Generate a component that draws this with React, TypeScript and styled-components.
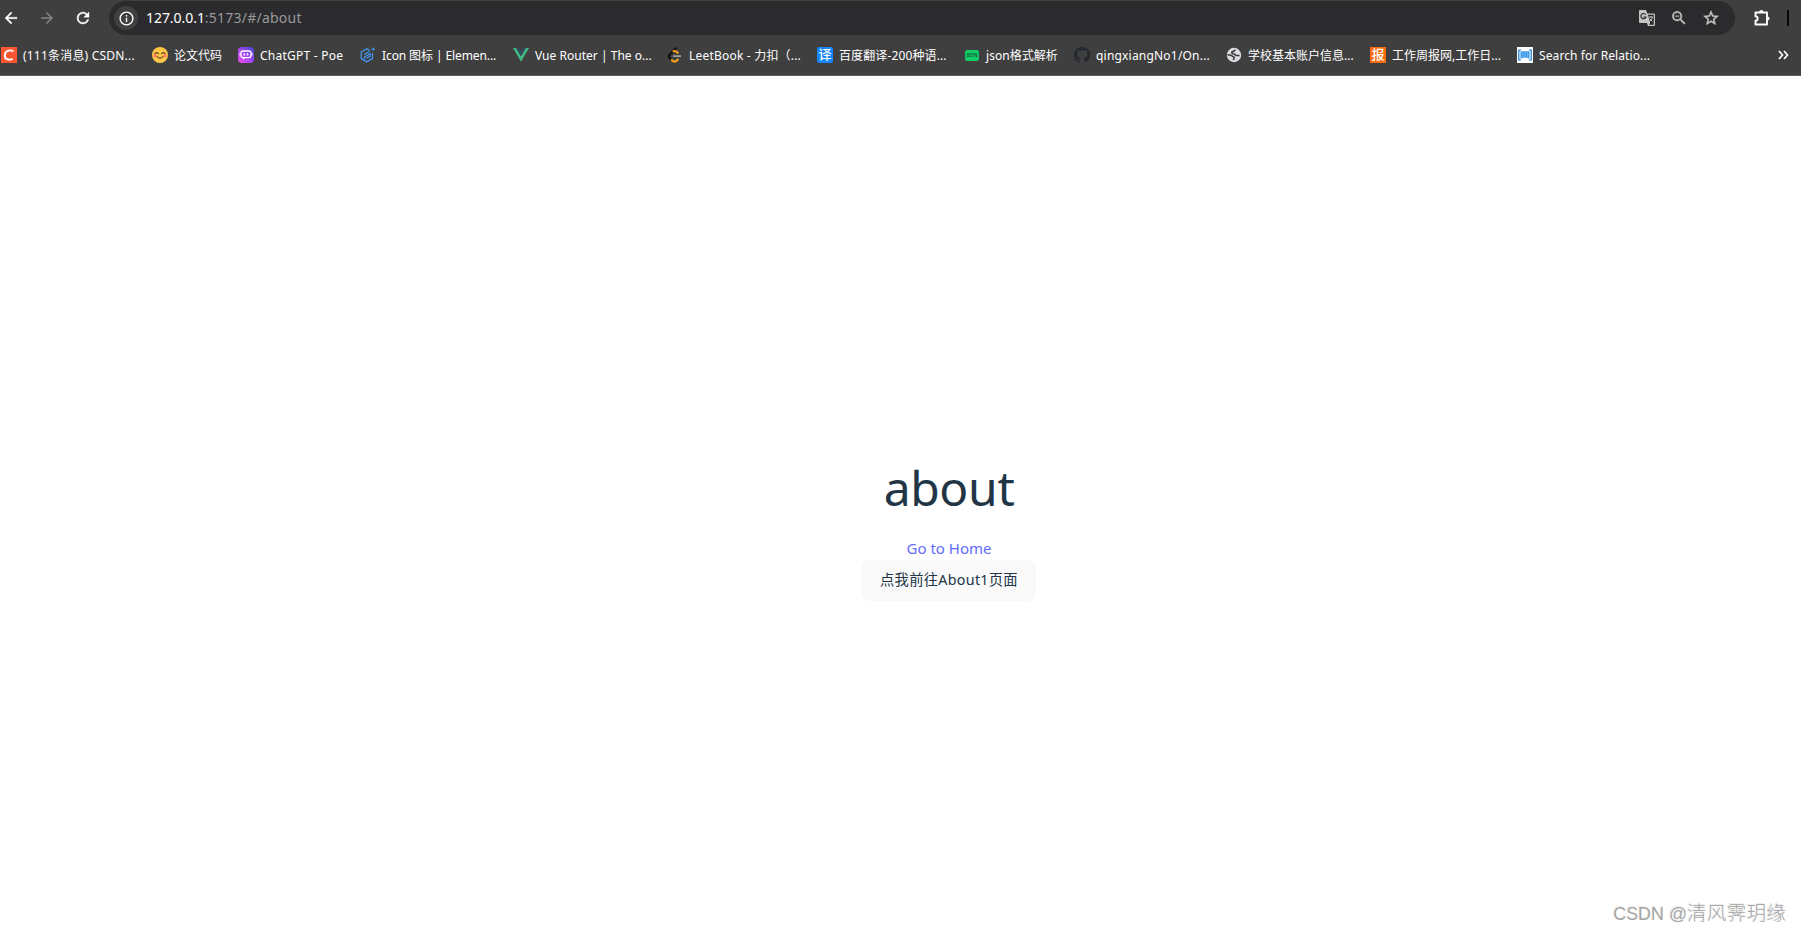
import React from "react";
import styled, { createGlobalStyle } from "styled-components";

const Global = createGlobalStyle`
  *{box-sizing:border-box}
  html,body{margin:0;padding:0;background:#fff;overflow:hidden}
  body{font-family:"Noto Sans","Noto Sans CJK SC",sans-serif}
`;
const Window = styled.div`
  width: 1801px;
  height: 930px;
  display: flex;
  flex-direction: column;
  overflow: hidden;
`;
const Chrome = styled.header`
  flex: none;
  height: 76px;
  background: #3f3f3f;
  border-bottom: 1px solid #5d5d5d;
`;
const NavRow = styled.div`
  height: 35px;
  padding-top: 1px;
  display: flex;
  align-items: center;
`;
const NavButtons = styled.nav`
  width: 109px;
  height: 34px;
  padding-left: 2px;
  display: flex;
  align-items: center;
  gap: 18px;
  svg { display: block; }
`;
const AddressBar = styled.div`
  width: 1626px;
  height: 34px;
  border-radius: 17px;
  background: #2b2b2e;
  display: flex;
  align-items: center;
  padding: 0 15px 0 5px;
`;
const SiteInfo = styled.span`
  width: 24px;
  height: 24px;
  border-radius: 50%;
  background: #404042;
  display: grid;
  place-items: center;
`;
const Url = styled.span`
  margin-left: 8px;
  flex: 1;
  font-size: 14px;
  line-height: 20px;
  letter-spacing: 0.23px;
  color: #98989b;
  white-space: nowrap;
  b { font-weight: 400; color: #fff; letter-spacing: -0.05px; }
`;
const Actions = styled.div`
  display: flex;
  gap: 14px;
  svg { display: block; }
`;
const Extensions = styled.div`
  margin-left: 17px;
  display: flex;
  align-items: center;
  gap: 15px;
`;
const Divider = styled.i`
  width: 2px;
  height: 16px;
  background: #080808;
`;
const Bookmarks = styled.div`
  height: 40px;
  padding-left: 1px;
  display: flex;
  align-items: center;
`;
const Bookmark = styled.a<{ $w: number }>`
  flex: none;
  width: ${(p) => p.$w}px;
  display: flex;
  align-items: center;
  gap: 6px;
  svg { display: block; flex: none; }
`;
const Label = styled.span<{ $ls: number }>`
  color: #fff;
  padding-top: 1px;
  font-size: 12px;
  line-height: 17px;
  letter-spacing: ${(p) => p.$ls}px;
  white-space: pre;
`;
const Tile = styled.span<{ $bg: string; $r: number }>`
  flex: none;
  width: 16px;
  height: 16px;
  border-radius: ${(p) => p.$r}px;
  background: ${(p) => p.$bg};
  color: #fff;
  font-size: 13px;
  font-weight: 500;
  line-height: 15px;
  text-align: center;
`;
const Page = styled.main`
  flex: 1;
  padding: 376px 0 0 97px;
  display: flex;
  flex-direction: column;
  align-items: center;
  color: #213547;
`;
const Title = styled.h1`
  margin: 0;
  font-size: 48px;
  line-height: 71px;
  font-weight: 400;
  letter-spacing: -0.35px;
`;
const HomeLink = styled.a`
  margin-top: 13px;
  height: 23px;
  font-size: 15px;
  line-height: 24px;
  color: #646cff;
`;
const GoButton = styled.button`
  width: 174px;
  height: 41px;
  padding: 0 0 1px;
  margin-top: 1px;
  border: 0;
  border-radius: 8px;
  background: #f9f9f9;
  color: #213547;
  font: 400 14.3px/20px "Noto Sans", "Noto Sans CJK SC", sans-serif;
  letter-spacing: 0.28px;
`;
const Watermark = styled.footer`
  height: 34px;
  padding: 2px 15px 0 0;
  display: flex;
  justify-content: flex-end;
  align-items: baseline;
  color: #a6a6a6;
  font: 300 19.8px/28px "Noto Sans CJK SC", sans-serif;
  text-shadow: -1px -1px 0 #ededed;
`;
const Latin = styled.span`
  font: 400 17.9px/28px "Liberation Sans", Arial, sans-serif;
  white-space: pre;
`;

const IconBox = ({ children, s = 16 }: { children: React.ReactNode; s?: number }) => (
  <svg width={s} height={s} viewBox="0 0 16 16" fill="none">{children}</svg>
);
const MATERIAL = {
  back: "M20 11H7.83l5.59-5.59L12 4l-8 8 8 8 1.41-1.41L7.83 13H20z",
  forward: "M12 4l-1.41 1.41L16.17 11H4v2h12.17l-5.58 5.59L12 20l8-8z",
  reload: "M17.65 6.35A7.96 7.96 0 0 0 12 4a8 8 0 1 0 7.73 10h-2.08A6 6 0 1 1 12 6c1.66 0 3.14.69 4.22 1.78L13 11h7V4z",
  info: "M11 7h2v2h-2zm0 4h2v6h-2zm1-9a10 10 0 1 0 0 20 10 10 0 0 0 0-20zm0 18a8 8 0 1 1 0-16 8 8 0 0 1 0 16z",
  zoomOut: "M15.5 14h-.79l-.28-.27A6.5 6.5 0 1 0 13.73 14.43l.27.28v.79l5 4.99L20.49 19zm-6 0a4.5 4.5 0 1 1 0-9 4.5 4.5 0 0 1 0 9zM7 9h5v1H7z",
  star: "M22 9.24l-7.19-.62L12 2 9.19 8.63 2 9.24l5.46 4.73L5.82 21 12 17.27 18.18 21l-1.63-7.03zM12 15.4l-3.76 2.27 1-4.28-3.32-2.88 4.38-.38L12 6.1l1.71 4.04 4.38.38-3.32 2.88 1 4.28z",
  github: "M8 0C3.58 0 0 3.58 0 8c0 3.54 2.29 6.53 5.47 7.59.4.07.55-.17.55-.38v-1.49C4 14.1 3.5 13.2 3.3 12.6c-.1-.3-.6-1.2-1-1.4-.3-.2-.8-.6 0-.6.7 0 1.2.6 1.4.9.8 1.4 2.1 1 2.6.8.1-.6.3-1 .6-1.2-2-.2-3.7-.9-3.7-4 0-.9.3-1.6.8-2.1-.1-.2-.4-1 .1-2.1 0 0 .7-.2 2.2.8a7.5 7.5 0 0 1 4 0c1.5-1 2.2-.8 2.2-.8.4 1.1.2 1.9.1 2.1.5.6.8 1.3.8 2.1 0 3.1-1.9 3.8-3.7 4 .3.3.6.8.6 1.5v2.6c0 .2.1.5.5.4A8 8 0 0 0 8 0z",
};
const Material = ({ d, s, c = "#fff", w = 0 }: { d: string; s: number; c?: string; w?: number }) => (
  <svg width={s} height={s} viewBox="0 0 24 24" fill={c} stroke={c} strokeWidth={w}><path d={d} /></svg>
);

const Csdn = () => <IconBox><path fill="#fc5531" d="M0 0h16v16H0z" /><path d="M12.4 4.3C8.5 2.2 4 4.2 3.8 8.2s3.7 5.5 7.8 3.6" stroke="#fff" strokeWidth="1.9" /></IconBox>;
const Smile = () => <IconBox><circle cx="8" cy="8" r="8" fill="#fdc945" /><circle cx="3" cy="8.8" r="1.8" fill="#ff7c69" /><circle cx="13" cy="8.8" r="1.8" fill="#ff7c69" /><path d="M3 6.7q1.7-2.2 3.4 0M9.6 6.7q1.7-2.2 3.4 0M5 9.6q3 3.2 6 0" stroke="#70432e" strokeWidth="1.2" strokeLinecap="round" /></IconBox>;
const Poe = () => <IconBox><defs><linearGradient id="poe" x1="0" y1="1" x2="1" y2="0"><stop stopColor="#f04ee8" /><stop offset=".5" stopColor="#a344f5" /><stop offset="1" stopColor="#4046c8" /></linearGradient></defs><rect width="16" height="16" rx="4" fill="url(#poe)" /><rect x="3" y="4" width="10" height="6.6" rx="2" stroke="#fff" strokeWidth="1.3" /><path d="M5 10.5v2.2l2.6-2.2" fill="#fff" /><path d="M2 6v2.5M14 6v2.5" stroke="#fff" /><path d="M6.4 6.2v2.2M9.6 6.2v2.2" stroke="#fff" strokeWidth="1.5" /></IconBox>;
const Element = () => <IconBox><path d="M9.8 3.4 6.8 1.7 1.2 5v6.6l5.6 3.2 5.6-3.2V6M13.2.6v3.2M11.6 2.2h3.2" stroke="#409eff" strokeWidth="1.1" /><path d="M4.3 7.4 9.4 4.5M4.5 12.2V10l5.6-3.2v2.4L6.5 11.3" stroke="#409eff" strokeWidth="1.1" /></IconBox>;
const Vue = () => <IconBox><path fill="#41b883" d="M0 1h3.2L8 9.2 12.8 1H16L8 14.8z" /><path fill="#35495e" d="M3.2 1h3L8 4.1 9.8 1h3L8 9.2z" /></IconBox>;
const LeetCode = () => <IconBox><path d="M9.5.8 2.4 8q-1.4 1.4 0 2.8l2.3 2.4" stroke="#111" strokeWidth="2" /><path d="m4.2 12.5 1.4 1.4q1.9 1.4 3.8 0l2-1.8M5.7 4.6q2-1.3 3.9.2l1.7 1.6" stroke="#ffa116" strokeWidth="2" /><path d="M6 9.1h8" stroke="#b3b3b3" strokeWidth="1.5" /></IconBox>;
const JsonMark = () => <IconBox><rect x="1" y="3" width="14" height="11" rx="2.5" fill="#13ce66" /><text x="8" y="9.6" textAnchor="middle" fill="#124b2c" fontSize="4.6" fontWeight="600" fontFamily="Noto Sans">JSON</text></IconBox>;
const Github = () => <IconBox><path d={MATERIAL.github} fill="#24292f" /></IconBox>;
const Globe = () => <IconBox><circle cx="8" cy="8" r="7.2" fill="#dadce0" /><path d="M9 2.6c-.2 1.5-1 1.9-2.6 2C5.400 5 5.600 6.500 6.800 6.700c1.700.2 2.700.4 3 1.800h3.700M1.500 7.800l3.400.4c1.300.3 1.300 1.500 2.800 1.700.8.4.4 1.800-.4 3.300" stroke="#3d3d3d" strokeWidth="1.6" /></IconBox>;
const SearchMark = () => <IconBox><path fill="#fff" d="M0 0h16v16H0z" /><path d="M4 3H1.8v10H4M12 3h2.200v10H12" stroke="#1676cf" strokeWidth="1.2" /><path d="M3.500 4.200h9v7.300h-1.500l-.8-.8H5.800l-.8.8H3.500z" fill="#3e9aec" /><path d="M5.700 4v7M8 4v7M10.300 4v7" stroke="#8cc4f5" strokeWidth=".6" /></IconBox>;

const bookmarks = [
  { w: 151, ls: 0.2, text: "(111条消息) CSDN...", icon: <Csdn /> },
  { w: 86, ls: 0, text: "论文代码", icon: <Smile /> },
  { w: 122, ls: 0.25, text: "ChatGPT - Poe", icon: <Poe /> },
  { w: 153, ls: -0.1, text: "Icon 图标 | Elemen...", icon: <Element /> },
  { w: 154, ls: 0.02, text: "Vue Router | The o...", icon: <Vue /> },
  { w: 150, ls: 0.2, text: "LeetBook - 力扣（...", icon: <LeetCode /> },
  { w: 147, ls: 0.12, text: "百度翻译-200种语...", icon: <Tile $bg="#1687fb" $r={2}>译</Tile> },
  { w: 110, ls: 0.05, text: "json格式解析", icon: <JsonMark /> },
  { w: 152, ls: 0.2, text: "qingxiangNo1/On...", icon: <Github /> },
  { w: 144, ls: 0, text: "学校基本账户信息...", icon: <Globe /> },
  { w: 147, ls: 0, text: "工作周报网,工作日...", icon: <Tile $bg="#f76b0c" $r={0}>报</Tile> },
  { w: 259, ls: 0.1, text: "Search for Relatio...", icon: <SearchMark /> },
];

export default function App() {
  return (
    <Window>
      <Global />
      <Chrome>
        <NavRow>
          <NavButtons>
            <Material d={MATERIAL.back} s={18} w={0.5} />
            <Material d={MATERIAL.forward} s={18} c="#858585" />
            <Material d={MATERIAL.reload} s={18} w={0.5} />
          </NavButtons>
          <AddressBar>
            <SiteInfo><Material d={MATERIAL.info} s={17} /></SiteInfo>
            <Url><b>127.0.0.1</b>:5173/#/about</Url>
            <Actions>
              <svg width="18" height="18" viewBox="0 0 18 18" fill="none">
                <path d="M2 1h6l1.3 3.500H16q1 0 1 1v10.500q0 1-1 1h-6l-1-3H2q-1 0-1-1V2q0-1 1-1z" fill="#c4c4c4" />
                <path d="M9.800 5.800h6v10h-4.800l1.200-2z" fill="#2b2b2e" />
                <path d="M7.600 5.600A2.600 2.600 0 1 0 7.900 8H5.500" stroke="#2b2b2e" strokeWidth="1.200" />
                <path d="M10.500 8h4.800M12.800 7v1M14.400 8q-.5 2.800-2.900 4.300M11.500 9.500l3 3" stroke="#c4c4c4" />
              </svg>
              <Material d={MATERIAL.zoomOut} s={18} c="#c4c4c4" w={0.4} />
              <Material d={MATERIAL.star} s={18} c="#c4c4c4" w={0.6} />
            </Actions>
          </AddressBar>
          <Extensions>
            <svg width="20" height="20" viewBox="0 0 20 20" fill="none">
              <path d="M3.500 4.500h11.500v12H3.500v-3.700q2.200-.3 2.200-2.300T3.500 8.200z" stroke="#fff" strokeWidth="1.900" strokeLinejoin="round" />
              <path d="M7.200 4a2.100 2.100 0 0 1 4.200 0zM15.500 8.400a2.100 2.100 0 0 1 0 4.200z" fill="#fff" />
            </svg>
            <Divider />
          </Extensions>
        </NavRow>
        <Bookmarks>
          {bookmarks.map((b) => (
            <Bookmark key={b.text} $w={b.w}>{b.icon}<Label $ls={b.ls}>{b.text}</Label></Bookmark>
          ))}
          <svg width="14" height="14" viewBox="0 0 14 14" fill="none"><path d="m3 3 3.5 4L3 11m5-8 3.5 4L8 11" stroke="#fff" strokeWidth="1.7" /></svg>
        </Bookmarks>
      </Chrome>
      <Page>
        <Title>about</Title>
        <HomeLink>Go to Home</HomeLink>
        <GoButton>点我前往About1页面</GoButton>
      </Page>
      <Watermark><Latin>CSDN @</Latin>清风霁玥缘</Watermark>
    </Window>
  );
}
